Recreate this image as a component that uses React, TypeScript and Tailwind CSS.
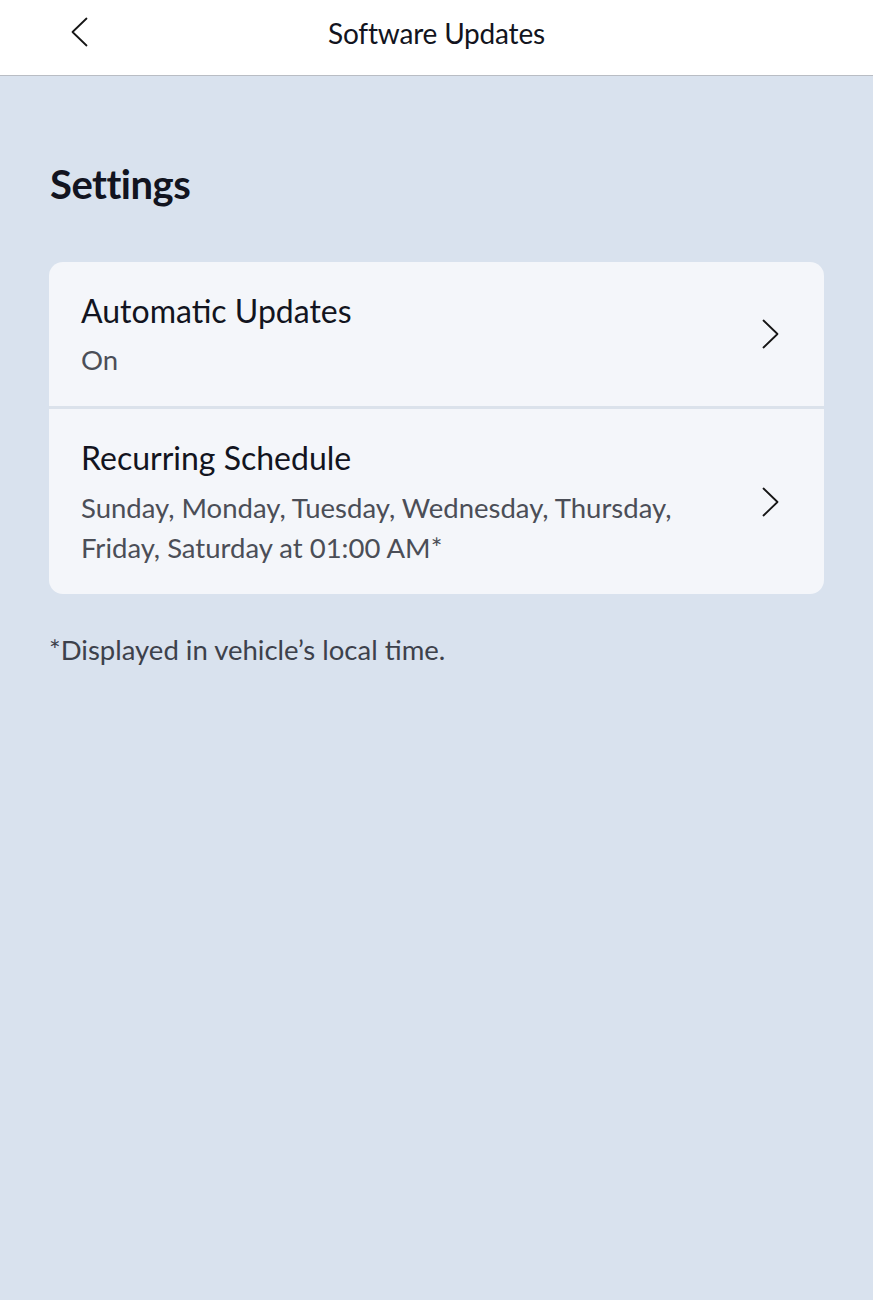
const rows = [
  { title: "Automatic Updates", sub: ["On"] },
  {
    title: "Recurring Schedule",
    sub: ["Sunday, Monday, Tuesday, Wednesday, Thursday,", "Friday, Saturday at 01:00 AM*"],
  },
];

function Chevron({ dir }: { dir: "left" | "right" }) {
  return (
    <svg width="17" height="30" viewBox="0 0 17 30" fill="none" stroke="#161616" strokeWidth="1.8" strokeLinecap="round" strokeLinejoin="round">
      {dir === "right" ? <polyline points="1.5,1.5 15.5,15 1.5,28.5" /> : <polyline points="15.5,1.5 1.5,15 15.5,28.5" />}
    </svg>
  );
}

export default function App() {
  return (
    <div className="min-h-[1300px] bg-[#d9e2ee] font-['Lato',sans-serif] text-[#121420]">
      <header className="relative flex h-[76px] items-center justify-center border-b border-[#b9bdc4] bg-white">
        <button className="absolute left-[71px] top-[17px]">
          <Chevron dir="left" />
        </button>
        <h1 className="pb-[9px] text-[28px] tracking-[-0.2px]">Software Updates</h1>
      </header>

      <main className="px-[49px] pt-[83px]">
        <h2 className="pl-[1px] text-[40px] font-bold leading-[50px] tracking-[-0.5px]">Settings</h2>

        <div className="mt-[53px] w-[775px] overflow-hidden rounded-[14px] bg-[#f4f6fa]">
          {rows.map((r, i) => (
            <div
              key={r.title}
              className={
                "flex justify-between pl-[32px] pr-[45px] pt-[29px] " +
                (i === 0 ? "h-[147px] border-b-[3px] border-[#dbe2eb]" : "h-[185px]")
              }
            >
              <div>
                <div className="text-[32px] leading-[40px]">{r.title}</div>
                <div className={"text-[27.5px] leading-[40px] text-[#4b4e57] " + (i === 0 ? "mt-[9px]" : "mt-[10px]")}>
                  {r.sub.map((s) => (
                    <div key={s}>{s}</div>
                  ))}
                </div>
              </div>
              <div className={i === 0 ? "mt-[28px]" : "mt-[49px]"}>
                <Chevron dir="right" />
              </div>
            </div>
          ))}
        </div>

        <p className="mt-[38px] text-[27.5px] leading-[36px] text-[#3d414b]">*Displayed in vehicle’s local time.</p>
      </main>
    </div>
  );
}
